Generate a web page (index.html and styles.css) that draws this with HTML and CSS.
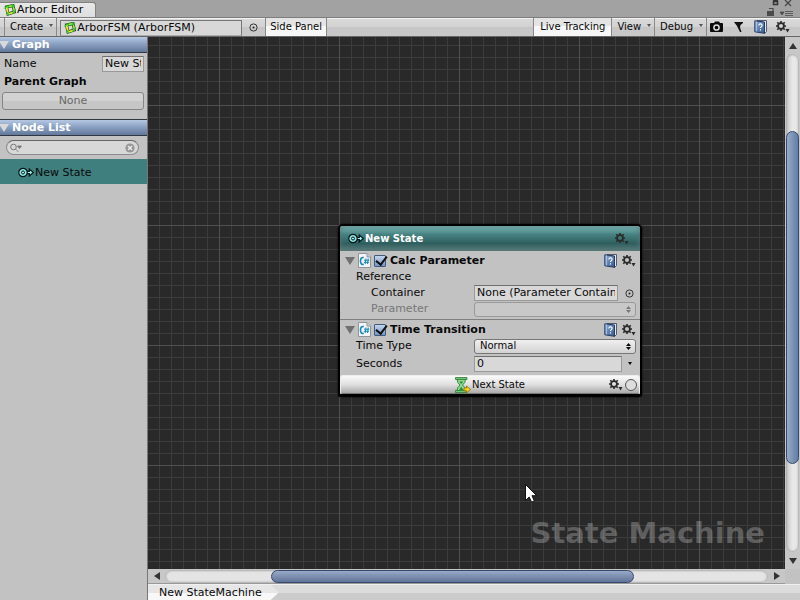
FILE: index.html
```html
<!DOCTYPE html>
<html lang="en">
<head>
<meta charset="utf-8">
<title>Arbor Editor</title>
<link rel="stylesheet" href="styles.css">
</head>
<body>
<svg class="defs" aria-hidden="true">
  <defs>
    <linearGradient id="bookfill" x1="0" y1="0" x2="1" y2="1"><stop offset="0" stop-color="#8fb0dc"/><stop offset="1" stop-color="#34568d"/></linearGradient>
    <symbol id="arbor" viewBox="0 0 12 12">
      <path d="M2.500 3 9 1.500l1.500 6.500-6.500 2z" fill="none" stroke="#2a3a18" stroke-width="3"/>
      <path d="M2.500 3 9 1.500l1.500 6.500" fill="none" stroke="#35d935" stroke-width="1.800"/>
      <path d="M10.500 8 4 10 2.500 3" fill="none" stroke="#e8ee2c" stroke-width="1.800"/>
      <path d="M.5 4.500 3.500 2M8 .5 10 3M8.500 9.500l3-2.500M3 8.500l2 3" stroke="#2fc53a" stroke-width="1.500"/>
      <path d="M5 2.400 7.500 1.800M9.500 3.500l.6 2.500" stroke="#e8ee2c" stroke-width="1"/>
    </symbol>
    <symbol id="gear" viewBox="0 0 14 12">
      <circle cx="5" cy="5" r="2.900" fill="none" stroke="#2a2a2a" stroke-width="1.700"/>
      <path d="M5 0v2M5 8v2M0 5h2M8 5h2M1.300 1.300 2.700 2.700M7.300 7.300l1.400 1.400M8.700 1.300 7.300 2.700M2.700 7.300 1.300 8.700" stroke="#2a2a2a" stroke-width="1.600"/>
      <path d="M9.500 8h4l-2 3.500z" fill="#2a2a2a"/>
    </symbol>
    <symbol id="book" viewBox="0 0 13 14">
      <path d="M3 .5h9.500v11L10.500 13.500V2.500L3 1z" fill="#e6e9ee" stroke="#303b50" stroke-width=".8"/>
      <path d="M.8.800 10.500 2v11.300L.8 11.800z" fill="url(#bookfill)" stroke="#263b60"/>
      <path d="M2.300 1.500v10" stroke="#b5c9e5"/>
      <path d="M4.800 5.500q.2-1.700 1.800-1.600 1.600.1 1.500 1.500c0 1.200-1.600 1.200-1.600 2.600M6.500 9.300v1.300" fill="none" stroke="#fff" stroke-width="1.100"/>
    </symbol>
    <symbol id="state" viewBox="0 0 16 11">
      <path d="M8.500 4.300h2.800V2L15.300 5.500l-4 3.500V6.700H8.500z" fill="#9ff0f0" stroke="#061616" stroke-width="1.200"/>
      <circle cx="5" cy="5.500" r="4.200" fill="#90e5e5" stroke="#061616" stroke-width="1.200"/>
      <circle cx="5" cy="5.500" r="1.500" fill="#9ff0f0" stroke="#061616"/>
    </symbol>
    <symbol id="script" viewBox="0 0 13 15">
      <path d="M.5.500h8.500l3.500 3.500v10.500H.5z" fill="#f2f5f7" stroke="#8d959b"/>
      <path d="M9 .5V4h3.500" fill="#ccd3d8" stroke="#8d959b"/>
      <path d="M5.800 4.500Q2.500 4 2.500 8T5.800 11.500" fill="none" stroke="#1689b8" stroke-width="1.600"/>
      <path d="M8 5.500 7.200 11M10.300 5.500 9.500 11M6 7.200h5.300M5.800 9.300H11" fill="none" stroke="#1689b8" stroke-width="1"/>
    </symbol>
    <symbol id="target" viewBox="0 0 9 9">
      <circle cx="4.500" cy="4.500" r="3.600" fill="none" stroke="#333"/><circle cx="4.500" cy="4.500" r="1" fill="#222"/>
    </symbol>
    <symbol id="fold" viewBox="0 0 10 8"><path d="M0 0h10L5 8z" fill="currentColor"/></symbol>
    <symbol id="caret" viewBox="0 0 4 3"><path d="M0 0h4L2 3z" fill="currentColor"/></symbol>
  </defs>
</svg>

<header class="tabbar">
  <div class="tab"><svg class="i12"><use href="#arbor"/></svg><span>Arbor Editor</span></div>
  <div class="window-tools">
    <svg viewBox="0 0 32 18" class="wintools" role="img" aria-label="Window controls">
      <path d="M8.500 1.500h4v3h-4zM8 .5h5" fill="none" stroke="#333" stroke-width="1.500"/>
      <path d="m20 0 6 6M26 0l-6 6" stroke="#444" stroke-width="1.200"/>
      <path d="M2 11h7v5H2z" fill="#4b4b4b"/><path d="M4.500 9V8.500H8v3" fill="none" stroke="#4b4b4b" stroke-width="1.200"/>
      <path d="M15 12h4l-2 3zM20 11.500h8M20 13.500h8M20 15.500h8" fill="#4b4b4b" stroke="#4b4b4b" stroke-width=".8"/>
    </svg>
  </div>
</header>

<nav class="toolbar">
  <button class="tool create">Create<svg class="caret"><use href="#caret"/></svg></button>
  <div class="object"><svg class="i12"><use href="#arbor"/></svg><span>ArborFSM (ArborFSM)</span></div>
  <button class="pick" aria-label="Select graph"><svg class="i9"><use href="#target"/></svg></button>
  <button class="tool on" aria-pressed="true">Side Panel</button>
  <span class="spacer"></span>
  <button class="tool on wide" aria-pressed="true">Live Tracking</button>
  <button class="tool">View<svg class="caret"><use href="#caret"/></svg></button>
  <button class="tool">Debug<svg class="caret"><use href="#caret"/></svg></button>
  <div class="tool-icons">
    <button aria-label="Capture"><svg viewBox="0 0 13 12" class="i13"><path d="M1 2h3l1-1.500h4L10 2h2q1 0 1 1v7q0 1-1 1H1q-1 0-1-1V3q0-1 1-1z" fill="#0b0b0b"/><circle cx="6.500" cy="6.500" r="2.600" fill="none" stroke="#ddd" stroke-width="1.500"/></svg></button>
    <button aria-label="Notification"><svg viewBox="0 0 13 12" class="i13"><path d="M2 1h9v1L8.500 4 8 6.500 9.500 11H8L5 5z" fill="#111"/></svg></button>
    <button aria-label="Help"><svg class="i13"><use href="#book"/></svg></button>
    <button aria-label="Settings"><svg class="gear"><use href="#gear"/></svg></button>
  </div>
</nav>

<div class="work">
  <aside class="side">
    <h2 class="bar"><svg class="fold"><use href="#fold"/></svg>Graph</h2>
    <div class="graph">
      <div class="name-row"><label for="gname">Name</label><input id="gname" class="field" type="text" value="New StateMachine"></div>
      <h3>Parent Graph</h3>
      <button class="none" disabled>None</button>
    </div>
    <h2 class="bar"><svg class="fold"><use href="#fold"/></svg>Node List</h2>
    <div class="search">
      <svg viewBox="0 0 12 10" class="glass"><circle cx="3.500" cy="4" r="2.800" fill="none" stroke="#777"/><path d="m5.500 6 3 3M7.500 3h4l-2 2.500z" fill="#777" stroke="#777" stroke-width=".8"/></svg>
      <input type="text" aria-label="Search nodes">
      <button aria-label="Clear search"><svg viewBox="0 0 10 10" class="clear"><circle cx="5" cy="5" r="4.600" fill="#969696"/><path d="m3 3 4 4M7 3 3 7" stroke="#eee" stroke-width="1.400"/></svg></button>
    </div>
    <div class="item"><svg class="state"><use href="#state"/></svg><span>New State</span></div>
  </aside>

  <main class="stage">
    <section class="canvas">
      <article class="node">
        <header class="node-head"><svg class="state"><use href="#state"/></svg><span>New State</span><button aria-label="State settings"><svg class="gear"><use href="#gear"/></svg></button></header>
        <section class="block">
          <div class="block-head">
            <svg class="fold"><use href="#fold"/></svg><svg class="script"><use href="#script"/></svg>
            <input type="checkbox" id="calc" checked><label for="calc">Calc Parameter</label>
            <button aria-label="Help"><svg class="i13"><use href="#book"/></svg></button><button aria-label="Settings"><svg class="gear"><use href="#gear"/></svg></button>
          </div>
          <div class="row">Reference</div>
          <div class="row indent"><label for="cont">Container</label><input id="cont" class="field" type="text" value="None (Parameter Container)"><button class="end" aria-label="Select container"><svg class="i9"><use href="#target"/></svg></button></div>
          <div class="row indent off"><label for="param">Parameter</label><div class="pop"><select id="param" disabled><option></option></select><svg viewBox="0 0 5 7" class="updown"><path d="M0 3h5L2.500 0zM0 4h5L2.500 7z" fill="currentColor"/></svg></div></div>
        </section>
        <section class="block">
          <div class="block-head">
            <svg class="fold"><use href="#fold"/></svg><svg class="script"><use href="#script"/></svg>
            <input type="checkbox" id="time" checked><label for="time">Time Transition</label>
            <button aria-label="Help"><svg class="i13"><use href="#book"/></svg></button><button aria-label="Settings"><svg class="gear"><use href="#gear"/></svg></button>
          </div>
          <div class="row"><label for="ttype">Time Type</label><div class="pop"><select id="ttype"><option>Normal</option></select><svg viewBox="0 0 5 7" class="updown"><path d="M0 3h5L2.500 0zM0 4h5L2.500 7z" fill="currentColor"/></svg></div></div>
          <div class="row tall"><label for="secs">Seconds</label><input id="secs" class="field" type="text" value="0"><button class="end narrow" aria-label="Value type"><svg class="caret"><use href="#caret"/></svg></button></div>
        </section>
        <footer class="link">
          <svg viewBox="0 0 16 16" class="hourglass">
            <path d="M2 2h8.500q0 4-3 6 3 2 3 6H2q0-4 3-6-3-2-3-6z" fill="#8fdc90" stroke="#3c8a42"/>
            <path d="M.5.500h11.500v2H.5zM.5 13.500h11.500v2H.5z" fill="#6fc873" stroke="#2f7a36" stroke-width=".8"/>
            <path d="M4.200 4.500h4L6.200 7zM6.200 9.500l2 3.500h-4z" fill="#2f8a3a"/>
            <path d="M9 11h2.500V9l4 3.500-4 3.300v-2H9z" fill="#ffd21f" stroke="#8a6a00" stroke-width=".8"/>
          </svg>
          <span>Next State</span>
          <div class="link-tools"><button aria-label="Link settings"><svg class="gear"><use href="#gear"/></svg></button><button class="pin" aria-label="Connect"></button></div>
        </footer>
      </article>
      <svg class="cursor" viewBox="0 0 12 19"><path d="M.5.500v16l3.700-3.500 2.400 5.200 2.700-1.200L7 11.700h4.700z" fill="#fff" stroke="#111"/></svg>
      <div class="mark">State Machine</div>
    </section>
    <div class="scroll vertical"><button aria-label="Scroll up"><svg viewBox="0 0 8 6"><path d="M0 6h8L4 0z"/></svg></button><div class="track"><div class="thumb"></div></div><button aria-label="Scroll down"><svg viewBox="0 0 8 6"><path d="M0 0h8L4 6z"/></svg></button></div>
    <div class="scroll horizontal"><button aria-label="Scroll left"><svg viewBox="0 0 6 8"><path d="M6 0v8L0 4z"/></svg></button><div class="track"><div class="thumb"></div></div><button aria-label="Scroll right"><svg viewBox="0 0 6 8"><path d="M0 0v8l6-4z"/></svg></button></div>
    <nav class="crumbs"><a href="#">New StateMachine</a></nav>
  </main>
</div>
</body>
</html>
```
FILE: styles.css
```css
* { box-sizing: border-box; }
body {
  margin: 0;
  height: 100vh;
  display: flex;
  flex-direction: column;
  overflow: hidden;
  background: #c2c2c2;
  color: #090909;
  font: 11px/16px "DejaVu Sans", Verdana, sans-serif;
}
button, input, select { font: inherit; color: inherit; margin: 0; border-radius: 0; }
button { padding: 0; border: 0; background: none; display: flex; align-items: center; justify-content: center; }
svg { display: block; flex: none; }
h2, h3 { margin: 0; font-size: 11px; }
.defs { position: absolute; width: 0; height: 0; }
.i12 { width: 12px; height: 12px; }
.i13 { width: 13px; height: 14px; }
.i9 { width: 9px; height: 9px; }
.gear { width: 14px; height: 12px; }
.caret { width: 4px; height: 3px; }
.state { width: 16px; height: 11px; }
.fold { width: 10px; height: 8px; }
.script { width: 13px; height: 15px; }

.tabbar { flex: none; height: 18px; display: flex; justify-content: space-between; background: #a2a2a2; border-bottom: 1px solid #7d7d7d; }
.tab { display: flex; align-items: center; gap: 1px; margin-top: 2px; padding: 0 12px 0 4px; background: linear-gradient(#e8e8e8, #dedede); border: solid #828282; border-width: 1px 1px 0 0; border-radius: 0 3px 0 0; }
.wintools { width: 32px; height: 18px; }
.window-tools { padding-right: 3px; }

.toolbar { flex: none; height: 19px; display: flex; background: linear-gradient(#f2f2f2 1px, #d9d9d9 1px, #d2d2d2 50%, #c6c6c6 50%, #c9c9c9); padding-left: 4px; border-bottom: 1px solid #666; }
.tool { padding: 0 6px 0 5px; border-right: 1px solid #888; font-size: 10px; }
.tool .caret { color: #555; margin: -4px -3px 0 6px; }
.create { border-left: 1px solid #888; }
.on { border-left: 1px solid #888; padding: 0 4px; background: linear-gradient(#e4e4e4 45%, #f7f7f7 45%); }
.wide { padding: 0 6px; }
.object { flex: 0 1 182px; margin: 2px 0 0 3px; padding-left: 3px; display: flex; align-items: center; gap: 1px; background: #d8d8d8; border: 1px solid #777; border-bottom-color: #aaa; white-space: nowrap; overflow: hidden; }
.pick { width: 23px; }
.spacer { flex: 1; }
.tool-icons { display: flex; align-items: center; gap: 9px; padding: 0 10px 0 3px; }

.work { flex: 1; display: flex; min-height: 0; }
.side { flex: none; width: 148px; background: #c2c2c2; border-right: 1px solid #777; }
.bar { height: 16px; display: flex; align-items: center; gap: 3px; color: #fff; background: linear-gradient(#b6c8e2, #8ba2c4 45%, #61789a); border: solid #303740; border-width: 0 0 1px; }
.bar .fold { color: #d9d9d9; margin-left: -1px; }
.graph { padding: 2px 3px 9px 2px; border-bottom: 1px solid #303740; }
.name-row { display: flex; align-items: end; justify-content: space-between; padding-left: 2px; }
.name-row label { padding-top: 1px; }
.field { height: 16px; padding: 0 2px; background: #d8d8d8; border: 1px solid #999; border-top-color: #707070; outline: 0; min-width: 0; }
.name-row .field { width: 42px; }
.graph h3 { margin: 2px 0 2px 2px; }
.none { width: 100%; height: 18px; border: 1px solid #858585; border-radius: 3px; background: linear-gradient(#d2d2d2 50%, #c6c6c6 50%); color: #686868; }
.search { height: 15px; margin: 4px 8px 4px 6px; padding: 0 3px; display: flex; align-items: center; border: 1px solid #8b8b8b; border-top-color: #666; border-radius: 8px; background: #d8d8d8; }
.search input { flex: 1; min-width: 0; border: 0; padding: 0; background: none; height: 12px; }
.glass { width: 12px; height: 10px; }
.clear { width: 10px; height: 10px; }
.item { height: 25px; padding: 2px 0 0 18px; display: flex; align-items: center; gap: 1px; background: #3f807f; }

.stage { flex: 1; min-width: 0; display: grid; grid-template: minmax(0, 1fr) 15px 16px / minmax(0, 1fr) 15px; }
.canvas {
  position: relative;
  overflow: hidden;
  background:
    linear-gradient(90deg, #505050 1px, transparent 1px) 71px 0 / 120px 120px,
    linear-gradient(#505050 1px, transparent 1px) 0 68px / 120px 120px,
    linear-gradient(90deg, #3c3c3c 1px, transparent 1px) 11px 0 / 12px 12px,
    linear-gradient(#3c3c3c 1px, transparent 1px) 0 8px / 12px 12px,
    #292929;
}
.node { position: absolute; left: 190px; top: 187px; width: 304px; border: 2px solid #000; border-bottom-width: 3px; border-radius: 5px 5px 3px 3px; background: #c2c2c2; box-shadow: 0 0 2px #000; }
.node-head { height: 25px; display: flex; align-items: center; gap: 1px; padding: 0 11px 0 8px; border-radius: 3px 3px 0 0; color: #fff; font-weight: bold; font-size: 10px; background: linear-gradient(#7cbcbb, #458180 35%, #2f5f5f 70%, #5b7a79); box-shadow: inset 0 0 6px #577; }
.node-head button { margin-left: auto; }
.block + .block { border-top: 1px solid #808080; }
.block { padding-bottom: 2px; }
.block-head { height: 18px; display: flex; align-items: center; padding: 1px 4px 0 5px; font-weight: bold; }
.block-head .fold { color: #707070; }
.block-head .script { margin: 0 3px; }
.block-head label { flex: 1; padding-left: 4px; }
.block-head button + button { margin-left: 5px; }
.block-head input { appearance: none; width: 12px; height: 12px; border: 1px solid #425b7d; border-radius: 1px; background: linear-gradient(#c2d5ee, #7396c7); position: relative; }
.block-head input:checked::after { content: ""; position: absolute; left: 3px; top: -2px; width: 5px; height: 9px; border: solid #111; border-width: 0 2px 2px 0; transform: rotate(38deg); }
.row { height: 16px; display: flex; align-items: center; padding: 0 4px 0 16px; }
.row label { width: 118px; }
.row.indent { padding-left: 31px; }
.row.indent label { width: 103px; }
.row .field { flex: 1; }
.row.tall { height: 18px; margin-top: 1px; }
.end { width: 18px; padding-left: 5px; }
.end.narrow { width: 14px; padding: 0 0 2px 2px; }
.pop { flex: 1; height: 15px; position: relative; display: flex; }
.pop select { appearance: none; flex: 1; height: 15px; padding: 0 5px; font-size: 10px; line-height: 12px; border: 1px solid #777; border-radius: 3px; background: linear-gradient(#f0f0f0, #d2d2d2); opacity: 1; }
.updown { position: absolute; right: 5px; top: 4px; width: 5px; height: 7px; }
.off { color: #777; }
.pop select:disabled { background: #c8c8c8; border-color: #999; }
.link { height: 19px; display: grid; grid-template-columns: 1fr auto auto 1fr; align-items: center; padding: 0 2px; gap: 1px; font-size: 10px; background: linear-gradient(#fafafa, #e0e0e0 50%, #aaa); border: 1px solid #eee; border-bottom-color: #777; border-radius: 3px; }
.hourglass { width: 16px; height: 16px; grid-column: 2; }
.link-tools { display: flex; justify-content: flex-end; align-items: center; gap: 2px; }
.pin { width: 12px; height: 12px; border: 1px solid #555; border-radius: 50%; background: #ddd; }
.cursor { position: absolute; left: 377px; top: 447px; width: 12px; height: 19px; }
.mark { position: absolute; right: 20px; bottom: 18px; font: bold 29px/36px "DejaVu Sans", sans-serif; color: rgba(255, 255, 255, .25); white-space: nowrap; }

.scroll { display: flex; align-items: center; background: #c7c7c7; }
.scroll button { flex: none; width: 17px; height: 17px; }
.scroll button svg { fill: #333; width: 8px; height: 6px; }
.horizontal button svg { width: 6px; height: 8px; }
.track { flex: 1; border-radius: 8px; box-shadow: inset 0 0 2px 1px #aaa; }
.vertical { flex-direction: column; }
.vertical .track { width: 13px; padding-top: 77px; background: linear-gradient(90deg, #c8c8c8, #e8e8e8 50%); }
.vertical .thumb { height: 79%; background: linear-gradient(90deg, #98aac7, #627da5); }
.horizontal { border-bottom: 1px solid #999; }
.horizontal .track { height: 13px; padding-left: 106px; background: #e4e4e4; }
.horizontal .thumb { height: 13px; width: 73%; background: linear-gradient(#98aac7, #627399); }
.thumb { border: 1px solid #344a70; border-radius: 7px; }
.crumbs { grid-column: 1 / -1; display: flex; border-top: 1px solid #f0f0f0; background: linear-gradient(#dcdcdc 50%, #cbcbcb 50%); }
.crumbs a { padding: 0 17px 0 11px; color: #090909; text-decoration: none; background: linear-gradient(#e6e6e6 50%, #f8f8f8 50%); clip-path: polygon(0 0, calc(100% - 8px) 0, 100% 50%, calc(100% - 8px) 100%, 0 100%); }
```
